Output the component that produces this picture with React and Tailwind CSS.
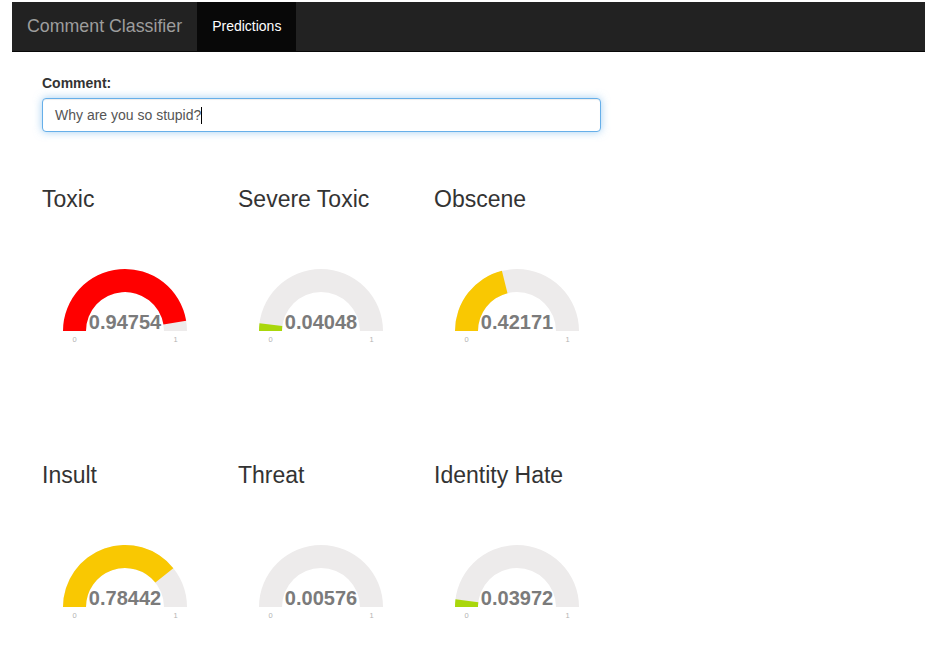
import React from 'react'

const FONT = { fontFamily: '"Liberation Sans", Arial, Helvetica, sans-serif' }

const PREDICTIONS = [
  { label: 'Toxic',         value: 0.94754 },
  { label: 'Severe Toxic',  value: 0.04048 },
  { label: 'Obscene',       value: 0.42171 },
  { label: 'Insult',        value: 0.78442 },
  { label: 'Threat',        value: 0.00576 },
  { label: 'Identity Hate', value: 0.03972 },
]

// justgage-like level colours, no gradient
const levelColor = (v) => (v < 1 / 3 ? '#a9d70b' : v < 0.9 ? '#f9c802' : '#ff0000')

function arcPath(cx, cy, R, r, v) {
  const t = Math.PI * (1 - v)
  const ox = cx + R * Math.cos(t), oy = cy - R * Math.sin(t)
  const ix = cx + r * Math.cos(t), iy = cy - r * Math.sin(t)
  return `M ${cx - R} ${cy} A ${R} ${R} 0 0 1 ${ox} ${oy} L ${ix} ${iy} A ${r} ${r} 0 0 0 ${cx - r} ${cy} Z`
}

function Gauge({ value }) {
  const cx = 83, cy = 119, R = 62, r = 39
  return (
    <svg width="166" height="250" viewBox="0 0 166 250" className="block">
      <path d={arcPath(cx, cy, R, r, 1)} fill="#edebeb" />
      {value >= 0.01 && <path d={arcPath(cx, cy, R, r, value)} fill={levelColor(value)} />}
      <text x={cx} y={cy - 2} textAnchor="middle" fontSize="20" fontWeight="bold" fill="#7b7b7b" style={FONT}>
        {value.toFixed(5)}
      </text>
      <text x={cx - 50.5} y={cy + 11} textAnchor="middle" fontSize="7.5" fill="#b3b3b3" style={FONT}>0</text>
      <text x={cx + 50.5} y={cy + 11} textAnchor="middle" fontSize="7.5" fill="#b3b3b3" style={FONT}>1</text>
    </svg>
  )
}

export default function App() {
  return (
    <div className="bg-white h-[649px] overflow-hidden pt-[2px]" style={FONT}>

      {/* Navbar */}
      <div className="ml-[12px] w-[913px] h-[50px] bg-[#222222] border-b border-[#080808] flex items-stretch">
        <div className="px-[15px] flex items-center text-[17.8px] text-[#9d9d9d]">Comment Classifier</div>
        <div className="px-[15px] flex items-center text-[14px] text-white bg-[#080808]">Predictions</div>
      </div>

      <div className="pl-[42px] pt-[21px]">
        <div className="text-[14px] leading-[20px] font-bold text-[#333333] mb-[5px]">Comment:</div>
        <div className="w-[559px] h-[34px] px-[12px] flex items-center text-[14px] text-[#555555] bg-white rounded-[4px] border border-[#66afe9] shadow-[inset_0_1px_1px_rgba(0,0,0,0.075),0_0_8px_rgba(102,175,233,0.6)]">
          Why are you so stupid?<span className="inline-block w-px h-[17px] bg-black" />
        </div>

        <div className="mt-[54px] grid grid-cols-[196px_196px_196px]">
          {PREDICTIONS.map(p => (
            <div key={p.label}>
              <h3 className="text-[23px] leading-[26px] text-[#333333]">{p.label}</h3>
              <Gauge value={p.value} />
            </div>
          ))}
        </div>
      </div>
    </div>
  )
}
